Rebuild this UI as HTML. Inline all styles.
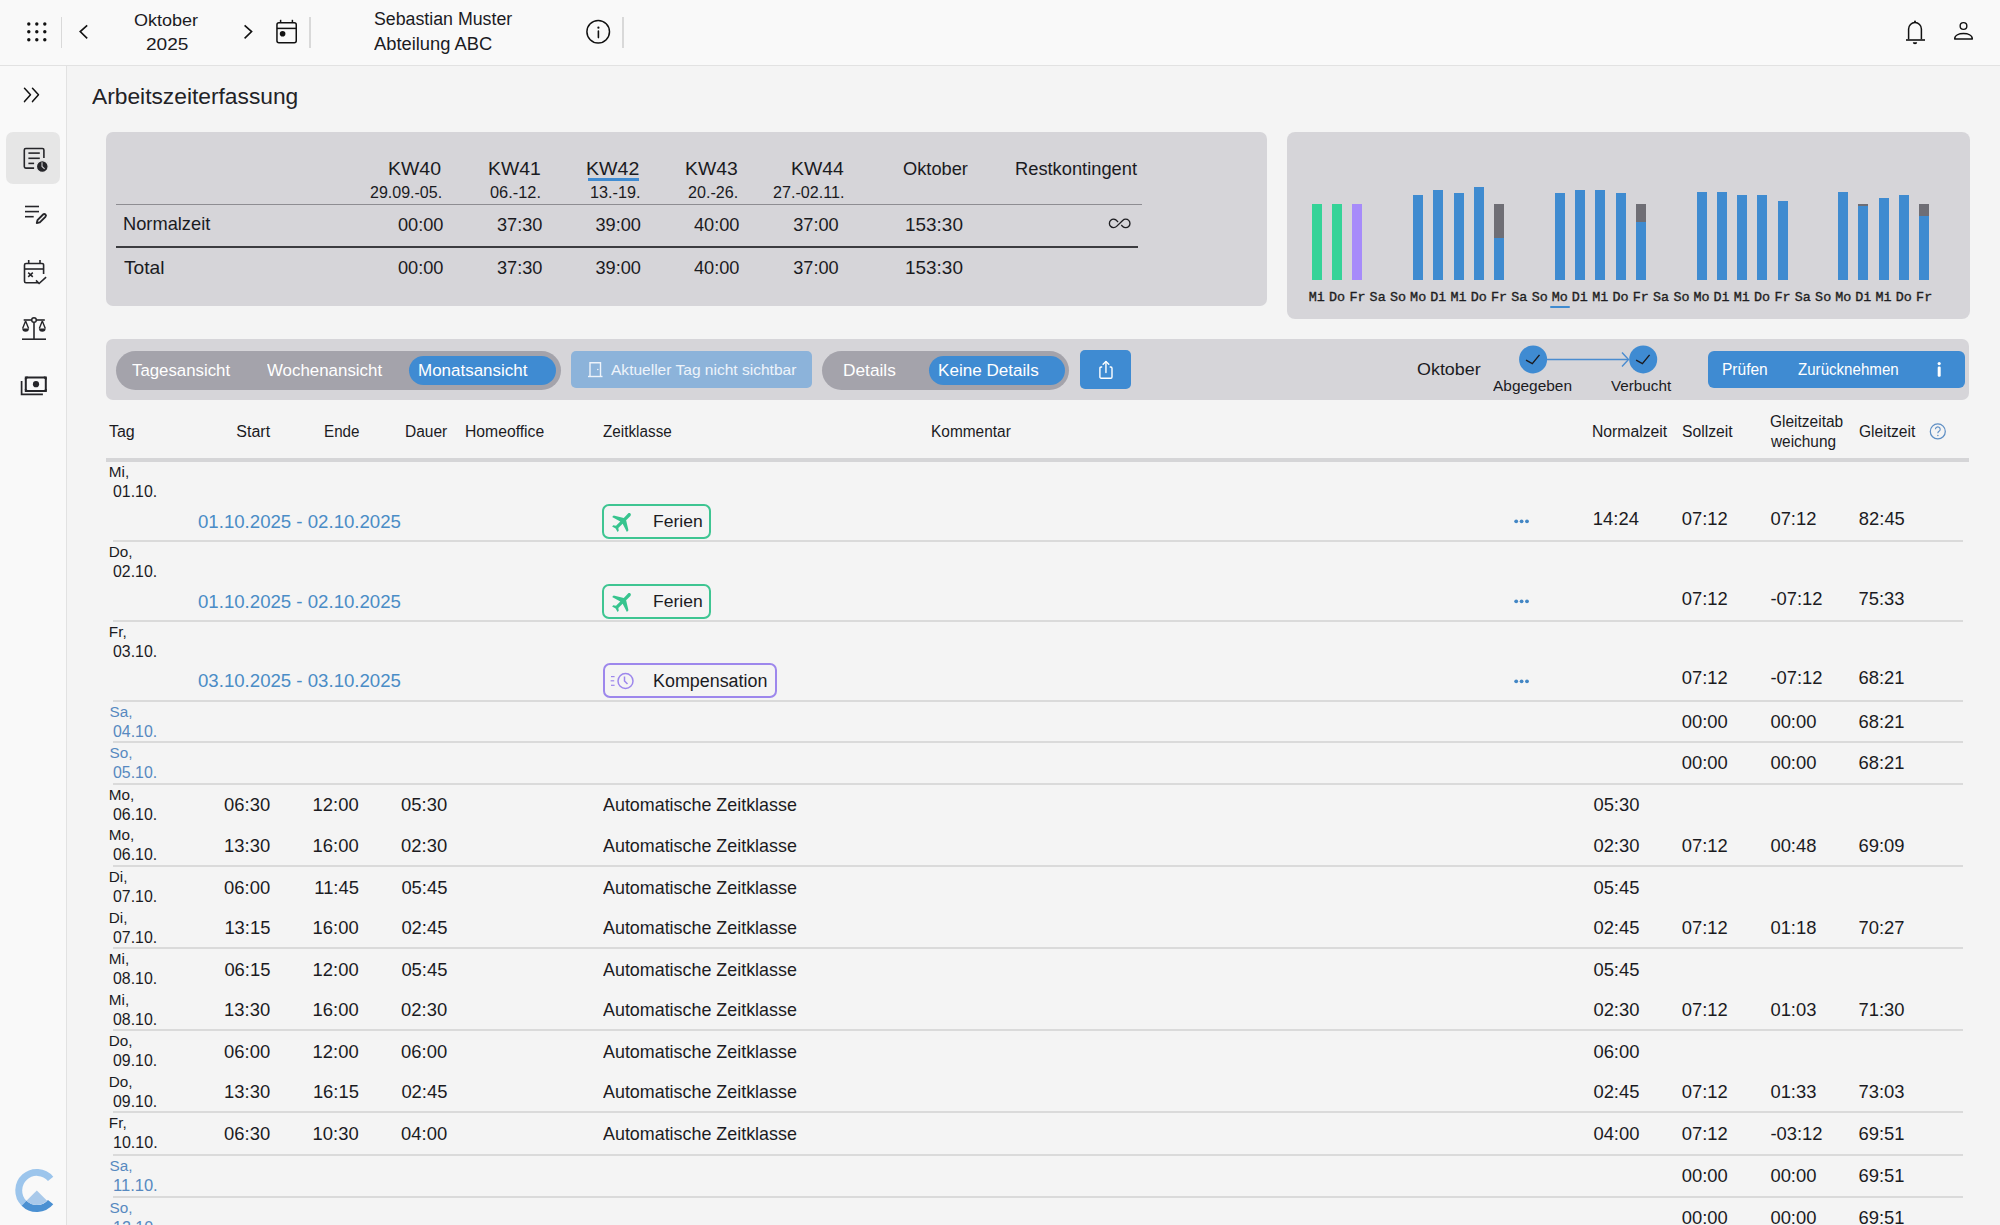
<!DOCTYPE html>
<html lang="de"><head><meta charset="utf-8"><title>Arbeitszeiterfassung</title>
<style>
html,body{margin:0;padding:0;}
body{width:2000px;height:1225px;overflow:hidden;position:relative;background:#f4f4f4;font-family:'Liberation Sans',sans-serif;}
span{position:absolute;white-space:nowrap;transform-origin:0 0;}
svg{overflow:visible;}
</style></head><body>
<div style="position:absolute;left:0px;top:0px;width:2000px;height:65px;background:#f9f9f9;border-radius:0px;"></div>
<div style="position:absolute;left:0px;top:65px;width:2000px;height:1px;background:#e2e2e2;border-radius:0px;"></div>
<div style="position:absolute;left:0px;top:66px;width:66px;height:1159px;background:#f9f9f9;border-radius:0px;"></div>
<div style="position:absolute;left:66px;top:66px;width:1px;height:1159px;background:#e2e2e2;border-radius:0px;"></div>
<svg style="position:absolute;left:0px;top:0px;" width="60" height="60" viewBox="0 0 60 60"><circle cx="28.8" cy="24" r="1.7" fill="#111"/><circle cx="28.8" cy="31.8" r="1.7" fill="#111"/><circle cx="28.8" cy="39.7" r="1.7" fill="#111"/><circle cx="36.8" cy="24" r="1.7" fill="#111"/><circle cx="36.8" cy="31.8" r="1.7" fill="#111"/><circle cx="36.8" cy="39.7" r="1.7" fill="#111"/><circle cx="44.8" cy="24" r="1.7" fill="#111"/><circle cx="44.8" cy="31.8" r="1.7" fill="#111"/><circle cx="44.8" cy="39.7" r="1.7" fill="#111"/></svg>
<div style="position:absolute;left:61px;top:17px;width:1px;height:31px;background:#d9d9d9;border-radius:0px;"></div>
<div style="position:absolute;left:309px;top:17px;width:2px;height:31px;background:#d9d9d9;border-radius:0px;"></div>
<div style="position:absolute;left:622px;top:17px;width:2px;height:31px;background:#d9d9d9;border-radius:0px;"></div>
<svg style="position:absolute;left:70px;top:15px;" width="200" height="35" viewBox="0 0 200 35"><polyline points="17.2,10.3 10.2,16.6 17.2,23.4" fill="none" stroke="#111" stroke-width="1.6" stroke-linejoin="miter"/><polyline points="174.6,10.3 181.6,16.6 174.6,23.4" fill="none" stroke="#111" stroke-width="1.6" stroke-linejoin="miter"/></svg>
<svg style="position:absolute;left:270px;top:15px;" width="35" height="35" viewBox="0 0 35 35"><rect x="6.95" y="7.75" width="19.3" height="20.1" rx="2" fill="none" stroke="#111" stroke-width="1.5"/><line x1="6.95" y1="13.4" x2="26.25" y2="13.4" stroke="#111" stroke-width="1.5"/><line x1="10.6" y1="4.8" x2="10.6" y2="8" stroke="#111" stroke-width="1.5"/><line x1="22.4" y1="4.8" x2="22.4" y2="8" stroke="#111" stroke-width="1.5"/><circle cx="12.6" cy="18.8" r="2.8" fill="#111"/></svg>
<svg style="position:absolute;left:580px;top:13px;" width="36" height="36" viewBox="0 0 36 36"><circle cx="18.2" cy="18.8" r="11.3" fill="none" stroke="#111" stroke-width="1.5"/><circle cx="18.4" cy="14.7" r="1.1" fill="#111"/><line x1="18.4" y1="18" x2="18.4" y2="24.6" stroke="#111" stroke-width="1.6" stroke-linecap="round"/></svg>
<svg style="position:absolute;left:1895px;top:15px;" width="40" height="35" viewBox="0 0 40 35"><path d="M13.6,24.3 V14 a6.4,6.4 0 0 1 12.8,0 V24.3" fill="none" stroke="#111" stroke-width="1.5"/><line x1="11" y1="25" x2="30" y2="25" stroke="#111" stroke-width="1.6"/><circle cx="20" cy="6.4" r="1" fill="#111"/><path d="M17.8,27.2 a2.2,2.1 0 0 0 4.4,0 z" fill="#111"/></svg>
<svg style="position:absolute;left:1945px;top:15px;" width="35" height="30" viewBox="0 0 35 30"><circle cx="18.5" cy="11" r="3.35" fill="none" stroke="#111" stroke-width="1.4"/><path d="M9.7,24 C9.7,20.3 14,18.6 18.5,18.6 C23,18.6 27.3,20.3 27.3,24 Z" fill="none" stroke="#111" stroke-width="1.5" stroke-linejoin="round"/></svg>
<svg style="position:absolute;left:15px;top:80px;" width="35" height="30" viewBox="0 0 35 30"><polyline points="9.5,8.3 15.5,14.8 9.5,21.6" fill="none" stroke="#111" stroke-width="1.5" stroke-linecap="round" stroke-linejoin="round"/><polyline points="17.5,8.3 23.5,14.8 17.5,21.6" fill="none" stroke="#111" stroke-width="1.5" stroke-linecap="round" stroke-linejoin="round"/></svg>
<div style="position:absolute;left:6px;top:132px;width:54px;height:52px;background:#e6e6e6;border-radius:7px;"></div>
<svg style="position:absolute;left:15px;top:140px;" width="40" height="40" viewBox="0 0 40 40"><path d="M19.1,28.1 H10.8 a1.5,1.5 0 0 1 -1.5,-1.5 V10 a1.5,1.5 0 0 1 1.5,-1.5 H27.4 a1.5,1.5 0 0 1 1.5,1.5 V17.9" fill="none" stroke="#26262a" stroke-width="1.6"/><line x1="13.4" y1="13.1" x2="24.8" y2="13.1" stroke="#26262a" stroke-width="1.6"/><line x1="13.4" y1="18.3" x2="24.8" y2="18.3" stroke="#26262a" stroke-width="1.6"/><line x1="13.4" y1="23.4" x2="19.1" y2="23.4" stroke="#26262a" stroke-width="1.6"/><circle cx="27.3" cy="26.5" r="5.9" fill="#26262a" stroke="#e6e6e6" stroke-width="1.3"/><path d="M27,22.3 v4.2 l2.6,2.4" fill="none" stroke="#cfcfd2" stroke-width="1.1"/></svg>
<svg style="position:absolute;left:15px;top:195px;" width="40" height="40" viewBox="0 0 40 40"><line x1="10" y1="11.5" x2="24" y2="11.5" stroke="#26262a" stroke-width="1.6"/><line x1="10" y1="16.6" x2="24" y2="16.6" stroke="#26262a" stroke-width="1.6"/><line x1="10" y1="21.7" x2="18.7" y2="21.7" stroke="#26262a" stroke-width="1.6"/><path d="M21.8,28 l0.7,-2.9 l5.6,-5.6 a1.6,1.6 0 0 1 2.3,2.3 l-5.6,5.6 z" fill="none" stroke="#26262a" stroke-width="1.9" stroke-linejoin="round"/></svg>
<svg style="position:absolute;left:15px;top:252px;" width="40" height="40" viewBox="0 0 40 40"><path d="M23.5,30.7 H11 a1.5,1.5 0 0 1 -1.5,-1.5 V13 a1.5,1.5 0 0 1 1.5,-1.5 H27.1 a1.5,1.5 0 0 1 1.5,1.5 V22" fill="none" stroke="#26262a" stroke-width="1.6"/><line x1="9.5" y1="17" x2="28.6" y2="17" stroke="#26262a" stroke-width="1.6"/><line x1="13.7" y1="8" x2="13.7" y2="11.5" stroke="#26262a" stroke-width="1.6"/><line x1="25" y1="8" x2="25" y2="11.5" stroke="#26262a" stroke-width="1.6"/><path d="M13.2,20.6 l4.6,4.3 M17.8,20.6 l-4.6,4.3" stroke="#26262a" stroke-width="1.5"/><polyline points="21,28.4 24.1,31.5 31.1,25.2" fill="none" stroke="#26262a" stroke-width="1.6"/></svg>
<svg style="position:absolute;left:15px;top:310px;" width="40" height="35" viewBox="0 0 40 35"><circle cx="19" cy="10" r="2.3" fill="none" stroke="#26262a" stroke-width="1.5"/><line x1="8.7" y1="10" x2="16.7" y2="10" stroke="#26262a" stroke-width="1.6"/><line x1="21.3" y1="10" x2="29.8" y2="10" stroke="#26262a" stroke-width="1.6"/><line x1="19" y1="12.3" x2="19" y2="29" stroke="#26262a" stroke-width="1.6"/><line x1="7" y1="29.2" x2="31" y2="29.2" stroke="#26262a" stroke-width="1.6"/><path d="M10.6,11 l-3,7.5 M10.6,11 l3,7.5 M27.3,11 l-3,7.5 M27.3,11 l3,7.5" fill="none" stroke="#26262a" stroke-width="1.4"/><path d="M7.3,18.6 h6.6 a3.3,3.2 0 0 1 -6.6,0 z M24,18.6 h6.6 a3.3,3.2 0 0 1 -6.6,0 z" fill="#26262a"/></svg>
<svg style="position:absolute;left:15px;top:368px;" width="40" height="35" viewBox="0 0 40 35"><rect x="10.8" y="9.5" width="20" height="13.6" rx="1" fill="none" stroke="#26262a" stroke-width="2"/><circle cx="21" cy="16.2" r="3.1" fill="#26262a"/><path d="M6.6,13 V26.3 H27.9" fill="none" stroke="#26262a" stroke-width="1.7"/><path d="M9.8,8.5 h3 a2.5,2.5 0 0 1 -3,3 z M31.8,8.5 h-3 a2.5,2.5 0 0 0 3,3 z M9.8,24.1 h3 a2.5,2.5 0 0 0 -3,-3 z M31.8,24.1 h-3 a2.5,2.5 0 0 1 3,-3 z" fill="#26262a"/></svg>
<svg style="position:absolute;left:10px;top:1160px;" width="50" height="60" viewBox="0 0 50 60"><path d="M40.63,18.9 A18.05,18.05 0 1 0 14.04,43.26" fill="none" stroke="#9cc5ec" stroke-width="6.9"/><path d="M14.04,43.26 A18.05,18.05 0 0 0 40.63,42.1" fill="none" stroke="#4a90d2" stroke-width="6.9"/><path d="M26.8,30.5 L37.12,40.82 A14.6,14.6 0 0 1 16.48,40.82 Z" fill="#a9c9ea"/></svg>
<div style="position:absolute;left:106px;top:132px;width:1161px;height:174px;background:#d6d5d9;border-radius:7px;"></div>
<div style="position:absolute;left:588px;top:178px;width:51px;height:2.5px;background:#3f8bd2;border-radius:0px;"></div>
<div style="position:absolute;left:116px;top:204px;width:1026px;height:1px;background:#8e8d92;border-radius:0px;"></div>
<div style="position:absolute;left:116px;top:246.2px;width:1022px;height:1.700000000000017px;background:#3c3c40;border-radius:0px;"></div>
<svg style="position:absolute;left:1100px;top:212px;" width="32" height="22" viewBox="0 0 32 22"><path d="M16.82,8.7 A4.2,4.2 0 1 0 16.57,14.37 L22.7,8.4 A4.25,4.25 0 1 1 22.7,14.4 L21.3,13.1 M16.82,8.7 L18.1,9.9" fill="none" stroke="#1e1e22" stroke-width="1.35"/></svg>
<div style="position:absolute;left:1287px;top:132px;width:683px;height:186.5px;background:#d6d5d9;border-radius:8px;"></div>
<div style="position:absolute;left:1312.0px;top:203.8px;width:10.0px;height:75.89999999999998px;background:#35d398;border-radius:0px;"></div>
<div style="position:absolute;left:1332.24px;top:203.8px;width:10.0px;height:75.89999999999998px;background:#35d398;border-radius:0px;"></div>
<div style="position:absolute;left:1352.48px;top:203.8px;width:10.0px;height:75.89999999999998px;background:#a78bfa;border-radius:0px;"></div>
<div style="position:absolute;left:1413.2px;top:194.8px;width:10.0px;height:84.89999999999998px;background:#3f8bd0;border-radius:0px;"></div>
<div style="position:absolute;left:1433.44px;top:189.8px;width:10.0px;height:89.89999999999998px;background:#3f8bd0;border-radius:0px;"></div>
<div style="position:absolute;left:1453.68px;top:192.5px;width:10.0px;height:87.19999999999999px;background:#3f8bd0;border-radius:0px;"></div>
<div style="position:absolute;left:1473.92px;top:187.3px;width:10.0px;height:92.39999999999998px;background:#3f8bd0;border-radius:0px;"></div>
<div style="position:absolute;left:1494.16px;top:203.8px;width:10.0px;height:75.89999999999998px;background:#6f6e75;border-radius:0px;"></div>
<div style="position:absolute;left:1494.16px;top:238px;width:10.0px;height:41.69999999999999px;background:#3f8bd0;border-radius:0px;"></div>
<div style="position:absolute;left:1554.88px;top:192.5px;width:10.0px;height:87.19999999999999px;background:#3f8bd0;border-radius:0px;"></div>
<div style="position:absolute;left:1575.12px;top:189.8px;width:10.0px;height:89.89999999999998px;background:#3f8bd0;border-radius:0px;"></div>
<div style="position:absolute;left:1595.36px;top:189.8px;width:10.0px;height:89.89999999999998px;background:#3f8bd0;border-radius:0px;"></div>
<div style="position:absolute;left:1615.6px;top:192.5px;width:10.0px;height:87.19999999999999px;background:#3f8bd0;border-radius:0px;"></div>
<div style="position:absolute;left:1635.84px;top:203.8px;width:10.0px;height:75.89999999999998px;background:#6f6e75;border-radius:0px;"></div>
<div style="position:absolute;left:1635.84px;top:221.8px;width:10.0px;height:57.89999999999998px;background:#3f8bd0;border-radius:0px;"></div>
<div style="position:absolute;left:1696.56px;top:192.2px;width:10.0px;height:87.5px;background:#3f8bd0;border-radius:0px;"></div>
<div style="position:absolute;left:1716.8px;top:192.2px;width:10.0px;height:87.5px;background:#3f8bd0;border-radius:0px;"></div>
<div style="position:absolute;left:1737.04px;top:195px;width:10.0px;height:84.69999999999999px;background:#3f8bd0;border-radius:0px;"></div>
<div style="position:absolute;left:1757.28px;top:195px;width:10.0px;height:84.69999999999999px;background:#3f8bd0;border-radius:0px;"></div>
<div style="position:absolute;left:1777.52px;top:201.3px;width:10.0px;height:78.39999999999998px;background:#3f8bd0;border-radius:0px;"></div>
<div style="position:absolute;left:1838.24px;top:192.2px;width:10.0px;height:87.5px;background:#3f8bd0;border-radius:0px;"></div>
<div style="position:absolute;left:1858.48px;top:203.8px;width:10.0px;height:75.89999999999998px;background:#6f6e75;border-radius:0px;"></div>
<div style="position:absolute;left:1858.48px;top:205.5px;width:10.0px;height:74.19999999999999px;background:#3f8bd0;border-radius:0px;"></div>
<div style="position:absolute;left:1878.72px;top:197.5px;width:10.0px;height:82.19999999999999px;background:#3f8bd0;border-radius:0px;"></div>
<div style="position:absolute;left:1898.96px;top:195px;width:10.0px;height:84.69999999999999px;background:#3f8bd0;border-radius:0px;"></div>
<div style="position:absolute;left:1919.2px;top:203.8px;width:10.0px;height:75.89999999999998px;background:#6f6e75;border-radius:0px;"></div>
<div style="position:absolute;left:1919.2px;top:216px;width:10.0px;height:63.69999999999999px;background:#3f8bd0;border-radius:0px;"></div>
<div style="position:absolute;left:1549.6px;top:305.5px;width:20.200000000000045px;height:2.5px;background:#3f8bd0;border-radius:1px;"></div>
<div style="position:absolute;left:106px;top:339px;width:1863px;height:61px;background:#d6d5d9;border-radius:7px;"></div>
<div style="position:absolute;left:116px;top:351px;width:444.5px;height:38.69999999999999px;background:#a4a3ab;border-radius:20px;"></div>
<div style="position:absolute;left:409.3px;top:355.5px;width:146.7px;height:29.5px;background:#3f8bd2;border-radius:15px;"></div>
<div style="position:absolute;left:570.7px;top:350.7px;width:241.0px;height:37.400000000000034px;background:#8cb3da;border-radius:5px;"></div>
<svg style="position:absolute;left:583px;top:358px;" width="25" height="24" viewBox="0 0 25 24"><path d="M7,18.5 V4.8 H17.5 V18.5" fill="none" stroke="#eef3fa" stroke-width="1.4"/><line x1="5" y1="18.5" x2="19.5" y2="18.5" stroke="#eef3fa" stroke-width="1.4"/><circle cx="14.8" cy="11.5" r="0.8" fill="#eef3fa"/></svg>
<div style="position:absolute;left:822.2px;top:350.7px;width:247.29999999999995px;height:39.10000000000002px;background:#a4a3ab;border-radius:20px;"></div>
<div style="position:absolute;left:928.7px;top:355.8px;width:136.5999999999999px;height:28.899999999999977px;background:#3f8bd2;border-radius:15px;"></div>
<div style="position:absolute;left:1080.3px;top:350.2px;width:50.700000000000045px;height:38.400000000000034px;background:#3f8bd2;border-radius:5px;"></div>
<svg style="position:absolute;left:1093px;top:356px;" width="26" height="28" viewBox="0 0 26 28"><path d="M9.2,11 H8.1 a1.2,1.2 0 0 0 -1.2,1.2 V21 a1.2,1.2 0 0 0 1.2,1.2 H17.8 a1.2,1.2 0 0 0 1.2,-1.2 V12.2 a1.2,1.2 0 0 0 -1.2,-1.2 H16.7" fill="none" stroke="#fff" stroke-width="1.4"/><line x1="12.95" y1="5.6" x2="12.95" y2="16.6" stroke="#fff" stroke-width="1.4" stroke-linecap="round"/><polyline points="10.1,8.3 12.95,5.4 15.8,8.3" fill="none" stroke="#fff" stroke-width="1.4" stroke-linecap="round" stroke-linejoin="round"/></svg>
<svg style="position:absolute;left:1515px;top:341px;" width="150" height="38" viewBox="0 0 150 38"><line x1="32" y1="18.5" x2="113" y2="18.5" stroke="#4a8cd0" stroke-width="1.5"/><polyline points="107,11.5 113.5,18.5 107,25.5" fill="none" stroke="#4a8cd0" stroke-width="1.4"/><circle cx="18.1" cy="18.4" r="14" fill="#3f8bd2"/><circle cx="128.2" cy="18.4" r="14" fill="#3f8bd2"/><polyline points="11,19.2 17.3,22.7 24.5,13.9" fill="none" stroke="#1b1b1f" stroke-width="1.4"/><polyline points="121.1,19.2 127.4,22.7 134.6,13.9" fill="none" stroke="#1b1b1f" stroke-width="1.4"/></svg>
<div style="position:absolute;left:1708px;top:350.6px;width:256.5999999999999px;height:37.5px;background:#3f8bd2;border-radius:6px;"></div>
<svg style="position:absolute;left:1930px;top:358px;" width="20" height="22" viewBox="0 0 20 22"><circle cx="9.2" cy="5.6" r="1.6" fill="#fff"/><rect x="7.7" y="8.6" width="3" height="10.2" rx="1.2" fill="#fff"/></svg>
<svg style="position:absolute;left:1927px;top:421px;" width="21" height="21" viewBox="0 0 21 21"><circle cx="10.8" cy="10.4" r="7.5" fill="none" stroke="#5f8fc4" stroke-width="1.25"/><path d="M8.4,8.2 a2.4,2.3 0 1 1 3.6,2 c-0.8,0.5 -1.2,1.1 -1.2,2.1" fill="none" stroke="#5f8fc4" stroke-width="1.1"/><circle cx="10.9" cy="14.5" r="0.75" fill="#5f8fc4"/></svg>
<div style="position:absolute;left:106px;top:458px;width:1863px;height:4px;background:#d5d5d7;border-radius:0px;"></div>
<div style="position:absolute;left:112.5px;top:540px;width:1850.5px;height:2px;background:#dadada;border-radius:0px;"></div>
<div style="position:absolute;left:112.5px;top:620px;width:1850.5px;height:2px;background:#dadada;border-radius:0px;"></div>
<div style="position:absolute;left:112.5px;top:700px;width:1850.5px;height:2px;background:#dadada;border-radius:0px;"></div>
<div style="position:absolute;left:112.5px;top:741px;width:1850.5px;height:2px;background:#dadada;border-radius:0px;"></div>
<div style="position:absolute;left:112.5px;top:783px;width:1850.5px;height:2px;background:#dadada;border-radius:0px;"></div>
<div style="position:absolute;left:112.5px;top:865px;width:1850.5px;height:2px;background:#dadada;border-radius:0px;"></div>
<div style="position:absolute;left:112.5px;top:947px;width:1850.5px;height:2px;background:#dadada;border-radius:0px;"></div>
<div style="position:absolute;left:112.5px;top:1029px;width:1850.5px;height:2px;background:#dadada;border-radius:0px;"></div>
<div style="position:absolute;left:112.5px;top:1111px;width:1850.5px;height:2px;background:#dadada;border-radius:0px;"></div>
<div style="position:absolute;left:112.5px;top:1154px;width:1850.5px;height:2px;background:#dadada;border-radius:0px;"></div>
<div style="position:absolute;left:112.5px;top:1196px;width:1850.5px;height:2px;background:#dadada;border-radius:0px;"></div>
<div style="position:absolute;left:602.3px;top:503.7px;width:108.30000000000007px;height:35.400000000000034px;background:transparent;border-radius:7px;box-sizing:border-box;border:2.6px solid #3ec592;"></div>
<svg style="position:absolute;left:610px;top:510.7px;" width="25" height="22" viewBox="0 0 25 22"><path transform="translate(12 11) scale(1.1) rotate(45) translate(-12 -11)" d="M21.5,14.2 v-2 l-8,-5 V1.7 c0,-0.85 -0.65,-1.5 -1.5,-1.5 s-1.5,0.65 -1.5,1.5 V7.2 l-8,5 v2 l8,-2.5 V17.2 l-2,1.5 v1.5 l3.5,-1 l3.5,1 v-1.5 l-2,-1.5 V11.7 z" fill="#36c48e"/></svg>
<svg style="position:absolute;left:1512px;top:516px;" width="20" height="10" viewBox="0 0 20 10"><circle cx="4.2" cy="5.3" r="1.9" fill="#4286c4"/><circle cx="9.6" cy="5.3" r="1.9" fill="#4286c4"/><circle cx="15" cy="5.3" r="1.9" fill="#4286c4"/></svg>
<div style="position:absolute;left:602.3px;top:583.8000000000001px;width:108.30000000000007px;height:35.39999999999998px;background:transparent;border-radius:7px;box-sizing:border-box;border:2.6px solid #3ec592;"></div>
<svg style="position:absolute;left:610px;top:590.8000000000001px;" width="25" height="22" viewBox="0 0 25 22"><path transform="translate(12 11) scale(1.1) rotate(45) translate(-12 -11)" d="M21.5,14.2 v-2 l-8,-5 V1.7 c0,-0.85 -0.65,-1.5 -1.5,-1.5 s-1.5,0.65 -1.5,1.5 V7.2 l-8,5 v2 l8,-2.5 V17.2 l-2,1.5 v1.5 l3.5,-1 l3.5,1 v-1.5 l-2,-1.5 V11.7 z" fill="#36c48e"/></svg>
<svg style="position:absolute;left:1512px;top:596px;" width="20" height="10" viewBox="0 0 20 10"><circle cx="4.2" cy="5.3" r="1.9" fill="#4286c4"/><circle cx="9.6" cy="5.3" r="1.9" fill="#4286c4"/><circle cx="15" cy="5.3" r="1.9" fill="#4286c4"/></svg>
<div style="position:absolute;left:602.5px;top:663.0px;width:174.0px;height:34.60000000000002px;background:transparent;border-radius:7px;box-sizing:border-box;border:2.4px solid #9d87ec;"></div>
<svg style="position:absolute;left:608px;top:671.0px;" width="30" height="20" viewBox="0 0 30 20"><line x1="3" y1="5.6" x2="6.6" y2="5.6" stroke="#9d87ec" stroke-width="1.2"/><line x1="2.6" y1="9.8" x2="6.2" y2="9.8" stroke="#9d87ec" stroke-width="1.2"/><line x1="3" y1="14.3" x2="6.6" y2="14.3" stroke="#9d87ec" stroke-width="1.2"/><circle cx="17.5" cy="10" r="7.5" fill="none" stroke="#9d87ec" stroke-width="1.5"/><polyline points="16.5,5.5 16.5,10 19.5,13" fill="none" stroke="#9d87ec" stroke-width="1.5"/></svg>
<svg style="position:absolute;left:1512px;top:676px;" width="20" height="10" viewBox="0 0 20 10"><circle cx="4.2" cy="5.3" r="1.9" fill="#4286c4"/><circle cx="9.6" cy="5.3" r="1.9" fill="#4286c4"/><circle cx="15" cy="5.3" r="1.9" fill="#4286c4"/></svg>
<span style="left:134.35px;top:11.57px;font-size:17.4px;line-height:17.4px;color:#1b1b1f;font-family:'Liberation Sans', sans-serif;font-weight:normal;transform:scaleX(1.0362);">Oktober</span>
<span style="left:145.51px;top:35.51px;font-size:17.0px;line-height:17.0px;color:#1b1b1f;font-family:'Liberation Sans', sans-serif;font-weight:normal;transform:scaleX(1.1230);">2025</span>
<span style="left:373.84px;top:11.30px;font-size:17.6px;line-height:17.6px;color:#1b1b1f;font-family:'Liberation Sans', sans-serif;font-weight:normal;transform:scaleX(1.0094);">Sebastian Muster</span>
<span style="left:374.40px;top:35.60px;font-size:17.6px;line-height:17.6px;color:#1b1b1f;font-family:'Liberation Sans', sans-serif;font-weight:normal;transform:scaleX(1.0416);">Abteilung ABC</span>
<span style="left:92.00px;top:85.78px;font-size:22.0px;line-height:22.0px;color:#222226;font-family:'Liberation Sans', sans-serif;font-weight:normal;transform:scaleX(1.0349);">Arbeitszeiterfassung</span>
<span style="left:388.48px;top:161.10px;font-size:17.6px;line-height:17.6px;color:#1b1b1f;font-family:'Liberation Sans', sans-serif;font-weight:normal;transform:scaleX(1.1060);">KW40</span>
<span style="left:370.25px;top:183.80px;font-size:16.3px;line-height:16.3px;color:#1b1b1f;font-family:'Liberation Sans', sans-serif;font-weight:normal;transform:scaleX(0.9836);">29.09.-05.</span>
<span style="left:487.99px;top:161.10px;font-size:17.6px;line-height:17.6px;color:#1b1b1f;font-family:'Liberation Sans', sans-serif;font-weight:normal;transform:scaleX(1.1017);">KW41</span>
<span style="left:490.49px;top:183.80px;font-size:16.3px;line-height:16.3px;color:#1b1b1f;font-family:'Liberation Sans', sans-serif;font-weight:normal;transform:scaleX(1.0048);">06.-12.</span>
<span style="left:586.47px;top:161.10px;font-size:17.6px;line-height:17.6px;color:#1b1b1f;font-family:'Liberation Sans', sans-serif;font-weight:normal;transform:scaleX(1.1126);">KW42</span>
<span style="left:589.99px;top:183.80px;font-size:16.3px;line-height:16.3px;color:#1b1b1f;font-family:'Liberation Sans', sans-serif;font-weight:normal;transform:scaleX(0.9947);">13.-19.</span>
<span style="left:684.79px;top:161.10px;font-size:17.6px;line-height:17.6px;color:#1b1b1f;font-family:'Liberation Sans', sans-serif;font-weight:normal;transform:scaleX(1.0995);">KW43</span>
<span style="left:687.94px;top:183.80px;font-size:16.3px;line-height:16.3px;color:#1b1b1f;font-family:'Liberation Sans', sans-serif;font-weight:normal;transform:scaleX(0.9895);">20.-26.</span>
<span style="left:791.09px;top:161.10px;font-size:17.6px;line-height:17.6px;color:#1b1b1f;font-family:'Liberation Sans', sans-serif;font-weight:normal;transform:scaleX(1.1016);">KW44</span>
<span style="left:772.94px;top:183.80px;font-size:16.3px;line-height:16.3px;color:#1b1b1f;font-family:'Liberation Sans', sans-serif;font-weight:normal;transform:scaleX(0.9906);">27.-02.11.</span>
<span style="left:903.14px;top:161.10px;font-size:17.6px;line-height:17.6px;color:#1b1b1f;font-family:'Liberation Sans', sans-serif;font-weight:normal;transform:scaleX(1.0374);">Oktober</span>
<span style="left:1014.57px;top:161.10px;font-size:17.6px;line-height:17.6px;color:#1b1b1f;font-family:'Liberation Sans', sans-serif;font-weight:normal;transform:scaleX(1.0397);">Restkontingent</span>
<span style="left:122.57px;top:215.93px;font-size:17.8px;line-height:17.8px;color:#1b1b1f;font-family:'Liberation Sans', sans-serif;font-weight:normal;transform:scaleX(1.0271);">Normalzeit</span>
<span style="left:123.70px;top:258.59px;font-size:18.2px;line-height:18.2px;color:#1b1b1f;font-family:'Liberation Sans', sans-serif;font-weight:normal;transform:scaleX(1.0552);">Total</span>
<span style="left:397.91px;top:215.59px;font-size:18.2px;line-height:18.2px;color:#1b1b1f;font-family:'Liberation Sans', sans-serif;font-weight:normal;">00:00</span>
<span style="left:496.91px;top:215.59px;font-size:18.2px;line-height:18.2px;color:#1b1b1f;font-family:'Liberation Sans', sans-serif;font-weight:normal;">37:30</span>
<span style="left:595.41px;top:215.59px;font-size:18.2px;line-height:18.2px;color:#1b1b1f;font-family:'Liberation Sans', sans-serif;font-weight:normal;">39:00</span>
<span style="left:693.91px;top:215.59px;font-size:18.2px;line-height:18.2px;color:#1b1b1f;font-family:'Liberation Sans', sans-serif;font-weight:normal;">40:00</span>
<span style="left:793.21px;top:215.59px;font-size:18.2px;line-height:18.2px;color:#1b1b1f;font-family:'Liberation Sans', sans-serif;font-weight:normal;">37:00</span>
<span style="left:904.82px;top:215.59px;font-size:18.2px;line-height:18.2px;color:#1b1b1f;font-family:'Liberation Sans', sans-serif;font-weight:normal;transform:scaleX(1.0411);">153:30</span>
<span style="left:397.91px;top:258.59px;font-size:18.2px;line-height:18.2px;color:#1b1b1f;font-family:'Liberation Sans', sans-serif;font-weight:normal;">00:00</span>
<span style="left:496.91px;top:258.59px;font-size:18.2px;line-height:18.2px;color:#1b1b1f;font-family:'Liberation Sans', sans-serif;font-weight:normal;">37:30</span>
<span style="left:595.41px;top:258.59px;font-size:18.2px;line-height:18.2px;color:#1b1b1f;font-family:'Liberation Sans', sans-serif;font-weight:normal;">39:00</span>
<span style="left:693.91px;top:258.59px;font-size:18.2px;line-height:18.2px;color:#1b1b1f;font-family:'Liberation Sans', sans-serif;font-weight:normal;">40:00</span>
<span style="left:793.21px;top:258.59px;font-size:18.2px;line-height:18.2px;color:#1b1b1f;font-family:'Liberation Sans', sans-serif;font-weight:normal;">37:00</span>
<span style="left:904.82px;top:258.59px;font-size:18.2px;line-height:18.2px;color:#1b1b1f;font-family:'Liberation Sans', sans-serif;font-weight:normal;transform:scaleX(1.0411);">153:30</span>
<span style="left:1308.79px;top:291.22px;font-size:13.4px;line-height:13.4px;color:#1e1e22;font-family:'Liberation Mono', monospace;font-weight:normal;-webkit-text-stroke:0.35px #1e1e22;">Mi</span>
<span style="left:1329.03px;top:291.22px;font-size:13.4px;line-height:13.4px;color:#1e1e22;font-family:'Liberation Mono', monospace;font-weight:normal;-webkit-text-stroke:0.35px #1e1e22;">Do</span>
<span style="left:1349.38px;top:291.22px;font-size:13.4px;line-height:13.4px;color:#1e1e22;font-family:'Liberation Mono', monospace;font-weight:normal;-webkit-text-stroke:0.35px #1e1e22;">Fr</span>
<span style="left:1369.62px;top:291.22px;font-size:13.4px;line-height:13.4px;color:#1e1e22;font-family:'Liberation Mono', monospace;font-weight:normal;-webkit-text-stroke:0.35px #1e1e22;">Sa</span>
<span style="left:1390.07px;top:291.22px;font-size:13.4px;line-height:13.4px;color:#1e1e22;font-family:'Liberation Mono', monospace;font-weight:normal;-webkit-text-stroke:0.35px #1e1e22;">So</span>
<span style="left:1410.10px;top:291.22px;font-size:13.4px;line-height:13.4px;color:#1e1e22;font-family:'Liberation Mono', monospace;font-weight:normal;-webkit-text-stroke:0.35px #1e1e22;">Mo</span>
<span style="left:1430.13px;top:291.22px;font-size:13.4px;line-height:13.4px;color:#1e1e22;font-family:'Liberation Mono', monospace;font-weight:normal;-webkit-text-stroke:0.35px #1e1e22;">Di</span>
<span style="left:1450.47px;top:291.22px;font-size:13.4px;line-height:13.4px;color:#1e1e22;font-family:'Liberation Mono', monospace;font-weight:normal;-webkit-text-stroke:0.35px #1e1e22;">Mi</span>
<span style="left:1470.71px;top:291.22px;font-size:13.4px;line-height:13.4px;color:#1e1e22;font-family:'Liberation Mono', monospace;font-weight:normal;-webkit-text-stroke:0.35px #1e1e22;">Do</span>
<span style="left:1491.06px;top:291.22px;font-size:13.4px;line-height:13.4px;color:#1e1e22;font-family:'Liberation Mono', monospace;font-weight:normal;-webkit-text-stroke:0.35px #1e1e22;">Fr</span>
<span style="left:1511.30px;top:291.22px;font-size:13.4px;line-height:13.4px;color:#1e1e22;font-family:'Liberation Mono', monospace;font-weight:normal;-webkit-text-stroke:0.35px #1e1e22;">Sa</span>
<span style="left:1531.75px;top:291.22px;font-size:13.4px;line-height:13.4px;color:#1e1e22;font-family:'Liberation Mono', monospace;font-weight:normal;-webkit-text-stroke:0.35px #1e1e22;">So</span>
<span style="left:1551.78px;top:291.22px;font-size:13.4px;line-height:13.4px;color:#1e1e22;font-family:'Liberation Mono', monospace;font-weight:normal;-webkit-text-stroke:0.35px #1e1e22;">Mo</span>
<span style="left:1571.81px;top:291.22px;font-size:13.4px;line-height:13.4px;color:#1e1e22;font-family:'Liberation Mono', monospace;font-weight:normal;-webkit-text-stroke:0.35px #1e1e22;">Di</span>
<span style="left:1592.15px;top:291.22px;font-size:13.4px;line-height:13.4px;color:#1e1e22;font-family:'Liberation Mono', monospace;font-weight:normal;-webkit-text-stroke:0.35px #1e1e22;">Mi</span>
<span style="left:1612.39px;top:291.22px;font-size:13.4px;line-height:13.4px;color:#1e1e22;font-family:'Liberation Mono', monospace;font-weight:normal;-webkit-text-stroke:0.35px #1e1e22;">Do</span>
<span style="left:1632.74px;top:291.22px;font-size:13.4px;line-height:13.4px;color:#1e1e22;font-family:'Liberation Mono', monospace;font-weight:normal;-webkit-text-stroke:0.35px #1e1e22;">Fr</span>
<span style="left:1652.98px;top:291.22px;font-size:13.4px;line-height:13.4px;color:#1e1e22;font-family:'Liberation Mono', monospace;font-weight:normal;-webkit-text-stroke:0.35px #1e1e22;">Sa</span>
<span style="left:1673.43px;top:291.22px;font-size:13.4px;line-height:13.4px;color:#1e1e22;font-family:'Liberation Mono', monospace;font-weight:normal;-webkit-text-stroke:0.35px #1e1e22;">So</span>
<span style="left:1693.46px;top:291.22px;font-size:13.4px;line-height:13.4px;color:#1e1e22;font-family:'Liberation Mono', monospace;font-weight:normal;-webkit-text-stroke:0.35px #1e1e22;">Mo</span>
<span style="left:1713.49px;top:291.22px;font-size:13.4px;line-height:13.4px;color:#1e1e22;font-family:'Liberation Mono', monospace;font-weight:normal;-webkit-text-stroke:0.35px #1e1e22;">Di</span>
<span style="left:1733.83px;top:291.22px;font-size:13.4px;line-height:13.4px;color:#1e1e22;font-family:'Liberation Mono', monospace;font-weight:normal;-webkit-text-stroke:0.35px #1e1e22;">Mi</span>
<span style="left:1754.07px;top:291.22px;font-size:13.4px;line-height:13.4px;color:#1e1e22;font-family:'Liberation Mono', monospace;font-weight:normal;-webkit-text-stroke:0.35px #1e1e22;">Do</span>
<span style="left:1774.42px;top:291.22px;font-size:13.4px;line-height:13.4px;color:#1e1e22;font-family:'Liberation Mono', monospace;font-weight:normal;-webkit-text-stroke:0.35px #1e1e22;">Fr</span>
<span style="left:1794.66px;top:291.22px;font-size:13.4px;line-height:13.4px;color:#1e1e22;font-family:'Liberation Mono', monospace;font-weight:normal;-webkit-text-stroke:0.35px #1e1e22;">Sa</span>
<span style="left:1815.11px;top:291.22px;font-size:13.4px;line-height:13.4px;color:#1e1e22;font-family:'Liberation Mono', monospace;font-weight:normal;-webkit-text-stroke:0.35px #1e1e22;">So</span>
<span style="left:1835.14px;top:291.22px;font-size:13.4px;line-height:13.4px;color:#1e1e22;font-family:'Liberation Mono', monospace;font-weight:normal;-webkit-text-stroke:0.35px #1e1e22;">Mo</span>
<span style="left:1855.17px;top:291.22px;font-size:13.4px;line-height:13.4px;color:#1e1e22;font-family:'Liberation Mono', monospace;font-weight:normal;-webkit-text-stroke:0.35px #1e1e22;">Di</span>
<span style="left:1875.51px;top:291.22px;font-size:13.4px;line-height:13.4px;color:#1e1e22;font-family:'Liberation Mono', monospace;font-weight:normal;-webkit-text-stroke:0.35px #1e1e22;">Mi</span>
<span style="left:1895.75px;top:291.22px;font-size:13.4px;line-height:13.4px;color:#1e1e22;font-family:'Liberation Mono', monospace;font-weight:normal;-webkit-text-stroke:0.35px #1e1e22;">Do</span>
<span style="left:1916.10px;top:291.22px;font-size:13.4px;line-height:13.4px;color:#1e1e22;font-family:'Liberation Mono', monospace;font-weight:normal;-webkit-text-stroke:0.35px #1e1e22;">Fr</span>
<span style="left:131.74px;top:361.77px;font-size:17.4px;line-height:17.4px;color:#fff;font-family:'Liberation Sans', sans-serif;font-weight:normal;transform:scaleX(0.9660);">Tagesansicht</span>
<span style="left:267.20px;top:361.77px;font-size:17.4px;line-height:17.4px;color:#fff;font-family:'Liberation Sans', sans-serif;font-weight:normal;transform:scaleX(0.9705);">Wochenansicht</span>
<span style="left:418.47px;top:361.77px;font-size:17.4px;line-height:17.4px;color:#fff;font-family:'Liberation Sans', sans-serif;font-weight:normal;transform:scaleX(0.9757);">Monatsansicht</span>
<span style="left:611.20px;top:362.25px;font-size:15.3px;line-height:15.3px;color:#eef3fa;font-family:'Liberation Sans', sans-serif;font-weight:normal;transform:scaleX(1.0155);">Aktueller Tag nicht sichtbar</span>
<span style="left:842.65px;top:361.77px;font-size:17.4px;line-height:17.4px;color:#fff;font-family:'Liberation Sans', sans-serif;font-weight:normal;transform:scaleX(0.9945);">Details</span>
<span style="left:938.16px;top:361.77px;font-size:17.4px;line-height:17.4px;color:#fff;font-family:'Liberation Sans', sans-serif;font-weight:normal;transform:scaleX(0.9829);">Keine Details</span>
<span style="left:1416.66px;top:361.75px;font-size:16.6px;line-height:16.6px;color:#1b1b1f;font-family:'Liberation Sans', sans-serif;font-weight:normal;transform:scaleX(1.0792);">Oktober</span>
<span style="left:1492.60px;top:378.84px;font-size:14.6px;line-height:14.6px;color:#1b1b1f;font-family:'Liberation Sans', sans-serif;font-weight:normal;transform:scaleX(1.0585);">Abgegeben</span>
<span style="left:1611.40px;top:378.84px;font-size:14.6px;line-height:14.6px;color:#1b1b1f;font-family:'Liberation Sans', sans-serif;font-weight:normal;transform:scaleX(1.0437);">Verbucht</span>
<span style="left:1722.29px;top:361.22px;font-size:16.4px;line-height:16.4px;color:#fff;font-family:'Liberation Sans', sans-serif;font-weight:normal;transform:scaleX(0.9476);">Prüfen</span>
<span style="left:1798.33px;top:361.22px;font-size:16.4px;line-height:16.4px;color:#fff;font-family:'Liberation Sans', sans-serif;font-weight:normal;transform:scaleX(0.9208);">Zurücknehmen</span>
<span style="left:108.95px;top:424.36px;font-size:16.0px;line-height:16.0px;color:#1b1b1f;font-family:'Liberation Sans', sans-serif;font-weight:normal;">Tag</span>
<span style="left:236.30px;top:424.36px;font-size:16.0px;line-height:16.0px;color:#1b1b1f;font-family:'Liberation Sans', sans-serif;font-weight:normal;">Start</span>
<span style="left:323.81px;top:424.36px;font-size:16.0px;line-height:16.0px;color:#1b1b1f;font-family:'Liberation Sans', sans-serif;font-weight:normal;transform:scaleX(0.9501);">Ende</span>
<span style="left:405.09px;top:424.36px;font-size:16.0px;line-height:16.0px;color:#1b1b1f;font-family:'Liberation Sans', sans-serif;font-weight:normal;transform:scaleX(0.9704);">Dauer</span>
<span style="left:464.87px;top:424.36px;font-size:16.0px;line-height:16.0px;color:#1b1b1f;font-family:'Liberation Sans', sans-serif;font-weight:normal;transform:scaleX(0.9818);">Homeoffice</span>
<span style="left:602.52px;top:424.36px;font-size:16.0px;line-height:16.0px;color:#1b1b1f;font-family:'Liberation Sans', sans-serif;font-weight:normal;transform:scaleX(0.9552);">Zeitklasse</span>
<span style="left:930.79px;top:424.36px;font-size:16.0px;line-height:16.0px;color:#1b1b1f;font-family:'Liberation Sans', sans-serif;font-weight:normal;transform:scaleX(0.9648);">Kommentar</span>
<span style="left:1592.37px;top:424.36px;font-size:16.0px;line-height:16.0px;color:#1b1b1f;font-family:'Liberation Sans', sans-serif;font-weight:normal;transform:scaleX(0.9832);">Normalzeit</span>
<span style="left:1681.81px;top:424.36px;font-size:16.0px;line-height:16.0px;color:#1b1b1f;font-family:'Liberation Sans', sans-serif;font-weight:normal;transform:scaleX(0.9818);">Sollzeit</span>
<span style="left:1770.27px;top:414.26px;font-size:16.0px;line-height:16.0px;color:#1b1b1f;font-family:'Liberation Sans', sans-serif;font-weight:normal;transform:scaleX(0.9677);">Gleitzeitab</span>
<span style="left:1771.24px;top:434.36px;font-size:16.0px;line-height:16.0px;color:#1b1b1f;font-family:'Liberation Sans', sans-serif;font-weight:normal;transform:scaleX(0.9619);">weichung</span>
<span style="left:1858.67px;top:424.36px;font-size:16.0px;line-height:16.0px;color:#1b1b1f;font-family:'Liberation Sans', sans-serif;font-weight:normal;transform:scaleX(0.9737);">Gleitzeit</span>
<span style="left:108.80px;top:464.05px;font-size:15.3px;line-height:15.3px;color:#1b1b1f;font-family:'Liberation Sans', sans-serif;font-weight:normal;">Mi,</span>
<span style="left:113.10px;top:484.09px;font-size:15.6px;line-height:15.6px;color:#1b1b1f;font-family:'Liberation Sans', sans-serif;font-weight:normal;transform:scaleX(1.0175);">01.10.</span>
<span style="left:197.82px;top:512.62px;font-size:18.4px;line-height:18.4px;color:#4a8cc6;font-family:'Liberation Sans', sans-serif;font-weight:normal;transform:scaleX(1.0125);">01.10.2025 - 02.10.2025</span>
<span style="left:652.63px;top:513.27px;font-size:17.4px;line-height:17.4px;color:#1b1b1f;font-family:'Liberation Sans', sans-serif;font-weight:normal;transform:scaleX(1.0067);">Ferien</span>
<span style="left:1592.85px;top:509.62px;font-size:18.4px;line-height:18.4px;color:#1b1b1f;font-family:'Liberation Sans', sans-serif;font-weight:normal;">14:24</span>
<span style="left:1681.72px;top:509.62px;font-size:18.4px;line-height:18.4px;color:#1b1b1f;font-family:'Liberation Sans', sans-serif;font-weight:normal;">07:12</span>
<span style="left:1770.42px;top:509.62px;font-size:18.4px;line-height:18.4px;color:#1b1b1f;font-family:'Liberation Sans', sans-serif;font-weight:normal;">07:12</span>
<span style="left:1858.83px;top:509.62px;font-size:18.4px;line-height:18.4px;color:#1b1b1f;font-family:'Liberation Sans', sans-serif;font-weight:normal;">82:45</span>
<span style="left:108.80px;top:544.15px;font-size:15.3px;line-height:15.3px;color:#1b1b1f;font-family:'Liberation Sans', sans-serif;font-weight:normal;">Do,</span>
<span style="left:113.10px;top:564.19px;font-size:15.6px;line-height:15.6px;color:#1b1b1f;font-family:'Liberation Sans', sans-serif;font-weight:normal;transform:scaleX(1.0175);">02.10.</span>
<span style="left:197.82px;top:592.72px;font-size:18.4px;line-height:18.4px;color:#4a8cc6;font-family:'Liberation Sans', sans-serif;font-weight:normal;transform:scaleX(1.0125);">01.10.2025 - 02.10.2025</span>
<span style="left:652.63px;top:593.37px;font-size:17.4px;line-height:17.4px;color:#1b1b1f;font-family:'Liberation Sans', sans-serif;font-weight:normal;transform:scaleX(1.0067);">Ferien</span>
<span style="left:1681.72px;top:589.72px;font-size:18.4px;line-height:18.4px;color:#1b1b1f;font-family:'Liberation Sans', sans-serif;font-weight:normal;">07:12</span>
<span style="left:1770.42px;top:589.72px;font-size:18.4px;line-height:18.4px;color:#1b1b1f;font-family:'Liberation Sans', sans-serif;font-weight:normal;">-07:12</span>
<span style="left:1858.54px;top:589.72px;font-size:18.4px;line-height:18.4px;color:#1b1b1f;font-family:'Liberation Sans', sans-serif;font-weight:normal;">75:33</span>
<span style="left:108.80px;top:623.55px;font-size:15.3px;line-height:15.3px;color:#1b1b1f;font-family:'Liberation Sans', sans-serif;font-weight:normal;">Fr,</span>
<span style="left:113.10px;top:643.59px;font-size:15.6px;line-height:15.6px;color:#1b1b1f;font-family:'Liberation Sans', sans-serif;font-weight:normal;transform:scaleX(1.0175);">03.10.</span>
<span style="left:197.82px;top:672.12px;font-size:18.4px;line-height:18.4px;color:#4a8cc6;font-family:'Liberation Sans', sans-serif;font-weight:normal;transform:scaleX(1.0125);">03.10.2025 - 03.10.2025</span>
<span style="left:652.60px;top:673.20px;font-size:17.6px;line-height:17.6px;color:#1b1b1f;font-family:'Liberation Sans', sans-serif;font-weight:normal;transform:scaleX(1.0168);">Kompensation</span>
<span style="left:1681.72px;top:669.12px;font-size:18.4px;line-height:18.4px;color:#1b1b1f;font-family:'Liberation Sans', sans-serif;font-weight:normal;">07:12</span>
<span style="left:1770.42px;top:669.12px;font-size:18.4px;line-height:18.4px;color:#1b1b1f;font-family:'Liberation Sans', sans-serif;font-weight:normal;">-07:12</span>
<span style="left:1858.54px;top:669.12px;font-size:18.4px;line-height:18.4px;color:#1b1b1f;font-family:'Liberation Sans', sans-serif;font-weight:normal;">68:21</span>
<span style="left:109.52px;top:703.55px;font-size:15.3px;line-height:15.3px;color:#5789c0;font-family:'Liberation Sans', sans-serif;font-weight:normal;">Sa,</span>
<span style="left:113.10px;top:723.59px;font-size:15.6px;line-height:15.6px;color:#5789c0;font-family:'Liberation Sans', sans-serif;font-weight:normal;transform:scaleX(1.0175);">04.10.</span>
<span style="left:1681.72px;top:712.62px;font-size:18.4px;line-height:18.4px;color:#1b1b1f;font-family:'Liberation Sans', sans-serif;font-weight:normal;">00:00</span>
<span style="left:1770.42px;top:712.62px;font-size:18.4px;line-height:18.4px;color:#1b1b1f;font-family:'Liberation Sans', sans-serif;font-weight:normal;">00:00</span>
<span style="left:1858.54px;top:712.62px;font-size:18.4px;line-height:18.4px;color:#1b1b1f;font-family:'Liberation Sans', sans-serif;font-weight:normal;">68:21</span>
<span style="left:109.52px;top:745.25px;font-size:15.3px;line-height:15.3px;color:#5789c0;font-family:'Liberation Sans', sans-serif;font-weight:normal;">So,</span>
<span style="left:113.10px;top:765.29px;font-size:15.6px;line-height:15.6px;color:#5789c0;font-family:'Liberation Sans', sans-serif;font-weight:normal;transform:scaleX(1.0175);">05.10.</span>
<span style="left:1681.72px;top:754.32px;font-size:18.4px;line-height:18.4px;color:#1b1b1f;font-family:'Liberation Sans', sans-serif;font-weight:normal;">00:00</span>
<span style="left:1770.42px;top:754.32px;font-size:18.4px;line-height:18.4px;color:#1b1b1f;font-family:'Liberation Sans', sans-serif;font-weight:normal;">00:00</span>
<span style="left:1858.54px;top:754.32px;font-size:18.4px;line-height:18.4px;color:#1b1b1f;font-family:'Liberation Sans', sans-serif;font-weight:normal;">68:21</span>
<span style="left:109.52px;top:1157.65px;font-size:15.3px;line-height:15.3px;color:#5789c0;font-family:'Liberation Sans', sans-serif;font-weight:normal;">Sa,</span>
<span style="left:112.57px;top:1177.69px;font-size:15.6px;line-height:15.6px;color:#5789c0;font-family:'Liberation Sans', sans-serif;font-weight:normal;transform:scaleX(1.0595);">11.10.</span>
<span style="left:1681.72px;top:1166.72px;font-size:18.4px;line-height:18.4px;color:#1b1b1f;font-family:'Liberation Sans', sans-serif;font-weight:normal;">00:00</span>
<span style="left:1770.42px;top:1166.72px;font-size:18.4px;line-height:18.4px;color:#1b1b1f;font-family:'Liberation Sans', sans-serif;font-weight:normal;">00:00</span>
<span style="left:1858.54px;top:1166.72px;font-size:18.4px;line-height:18.4px;color:#1b1b1f;font-family:'Liberation Sans', sans-serif;font-weight:normal;">69:51</span>
<span style="left:109.52px;top:1199.55px;font-size:15.3px;line-height:15.3px;color:#5789c0;font-family:'Liberation Sans', sans-serif;font-weight:normal;">So,</span>
<span style="left:112.60px;top:1219.59px;font-size:15.6px;line-height:15.6px;color:#5789c0;font-family:'Liberation Sans', sans-serif;font-weight:normal;transform:scaleX(1.0296);">12.10.</span>
<span style="left:1681.72px;top:1208.62px;font-size:18.4px;line-height:18.4px;color:#1b1b1f;font-family:'Liberation Sans', sans-serif;font-weight:normal;">00:00</span>
<span style="left:1770.42px;top:1208.62px;font-size:18.4px;line-height:18.4px;color:#1b1b1f;font-family:'Liberation Sans', sans-serif;font-weight:normal;">00:00</span>
<span style="left:1858.54px;top:1208.62px;font-size:18.4px;line-height:18.4px;color:#1b1b1f;font-family:'Liberation Sans', sans-serif;font-weight:normal;">69:51</span>
<span style="left:108.80px;top:786.85px;font-size:15.3px;line-height:15.3px;color:#1b1b1f;font-family:'Liberation Sans', sans-serif;font-weight:normal;">Mo,</span>
<span style="left:113.10px;top:806.89px;font-size:15.6px;line-height:15.6px;color:#1b1b1f;font-family:'Liberation Sans', sans-serif;font-weight:normal;transform:scaleX(1.0175);">06.10.</span>
<span style="left:224.11px;top:796.12px;font-size:18.4px;line-height:18.4px;color:#1b1b1f;font-family:'Liberation Sans', sans-serif;font-weight:normal;">06:30</span>
<span style="left:312.61px;top:796.12px;font-size:18.4px;line-height:18.4px;color:#1b1b1f;font-family:'Liberation Sans', sans-serif;font-weight:normal;">12:00</span>
<span style="left:401.11px;top:796.12px;font-size:18.4px;line-height:18.4px;color:#1b1b1f;font-family:'Liberation Sans', sans-serif;font-weight:normal;">05:30</span>
<span style="left:603.30px;top:796.12px;font-size:18.4px;line-height:18.4px;color:#1b1b1f;font-family:'Liberation Sans', sans-serif;font-weight:normal;transform:scaleX(0.9725);">Automatische Zeitklasse</span>
<span style="left:1593.42px;top:796.12px;font-size:18.4px;line-height:18.4px;color:#1b1b1f;font-family:'Liberation Sans', sans-serif;font-weight:normal;">05:30</span>
<span style="left:108.80px;top:827.45px;font-size:15.3px;line-height:15.3px;color:#1b1b1f;font-family:'Liberation Sans', sans-serif;font-weight:normal;">Mo,</span>
<span style="left:113.10px;top:847.49px;font-size:15.6px;line-height:15.6px;color:#1b1b1f;font-family:'Liberation Sans', sans-serif;font-weight:normal;transform:scaleX(1.0175);">06.10.</span>
<span style="left:224.11px;top:836.72px;font-size:18.4px;line-height:18.4px;color:#1b1b1f;font-family:'Liberation Sans', sans-serif;font-weight:normal;">13:30</span>
<span style="left:312.61px;top:836.72px;font-size:18.4px;line-height:18.4px;color:#1b1b1f;font-family:'Liberation Sans', sans-serif;font-weight:normal;">16:00</span>
<span style="left:401.11px;top:836.72px;font-size:18.4px;line-height:18.4px;color:#1b1b1f;font-family:'Liberation Sans', sans-serif;font-weight:normal;">02:30</span>
<span style="left:603.30px;top:836.72px;font-size:18.4px;line-height:18.4px;color:#1b1b1f;font-family:'Liberation Sans', sans-serif;font-weight:normal;transform:scaleX(0.9725);">Automatische Zeitklasse</span>
<span style="left:1593.42px;top:836.72px;font-size:18.4px;line-height:18.4px;color:#1b1b1f;font-family:'Liberation Sans', sans-serif;font-weight:normal;">02:30</span>
<span style="left:1681.72px;top:836.72px;font-size:18.4px;line-height:18.4px;color:#1b1b1f;font-family:'Liberation Sans', sans-serif;font-weight:normal;">07:12</span>
<span style="left:1770.42px;top:836.72px;font-size:18.4px;line-height:18.4px;color:#1b1b1f;font-family:'Liberation Sans', sans-serif;font-weight:normal;">00:48</span>
<span style="left:1858.54px;top:836.72px;font-size:18.4px;line-height:18.4px;color:#1b1b1f;font-family:'Liberation Sans', sans-serif;font-weight:normal;">69:09</span>
<span style="left:108.80px;top:869.25px;font-size:15.3px;line-height:15.3px;color:#1b1b1f;font-family:'Liberation Sans', sans-serif;font-weight:normal;">Di,</span>
<span style="left:113.10px;top:889.29px;font-size:15.6px;line-height:15.6px;color:#1b1b1f;font-family:'Liberation Sans', sans-serif;font-weight:normal;transform:scaleX(1.0175);">07.10.</span>
<span style="left:224.11px;top:878.52px;font-size:18.4px;line-height:18.4px;color:#1b1b1f;font-family:'Liberation Sans', sans-serif;font-weight:normal;">06:00</span>
<span style="left:314.27px;top:878.52px;font-size:18.4px;line-height:18.4px;color:#1b1b1f;font-family:'Liberation Sans', sans-serif;font-weight:normal;">11:45</span>
<span style="left:401.40px;top:878.52px;font-size:18.4px;line-height:18.4px;color:#1b1b1f;font-family:'Liberation Sans', sans-serif;font-weight:normal;">05:45</span>
<span style="left:603.30px;top:878.52px;font-size:18.4px;line-height:18.4px;color:#1b1b1f;font-family:'Liberation Sans', sans-serif;font-weight:normal;transform:scaleX(0.9725);">Automatische Zeitklasse</span>
<span style="left:1593.42px;top:878.52px;font-size:18.4px;line-height:18.4px;color:#1b1b1f;font-family:'Liberation Sans', sans-serif;font-weight:normal;">05:45</span>
<span style="left:108.80px;top:909.85px;font-size:15.3px;line-height:15.3px;color:#1b1b1f;font-family:'Liberation Sans', sans-serif;font-weight:normal;">Di,</span>
<span style="left:113.10px;top:929.89px;font-size:15.6px;line-height:15.6px;color:#1b1b1f;font-family:'Liberation Sans', sans-serif;font-weight:normal;transform:scaleX(1.0175);">07.10.</span>
<span style="left:224.40px;top:919.12px;font-size:18.4px;line-height:18.4px;color:#1b1b1f;font-family:'Liberation Sans', sans-serif;font-weight:normal;">13:15</span>
<span style="left:312.61px;top:919.12px;font-size:18.4px;line-height:18.4px;color:#1b1b1f;font-family:'Liberation Sans', sans-serif;font-weight:normal;">16:00</span>
<span style="left:401.40px;top:919.12px;font-size:18.4px;line-height:18.4px;color:#1b1b1f;font-family:'Liberation Sans', sans-serif;font-weight:normal;">02:45</span>
<span style="left:603.30px;top:919.12px;font-size:18.4px;line-height:18.4px;color:#1b1b1f;font-family:'Liberation Sans', sans-serif;font-weight:normal;transform:scaleX(0.9725);">Automatische Zeitklasse</span>
<span style="left:1593.42px;top:919.12px;font-size:18.4px;line-height:18.4px;color:#1b1b1f;font-family:'Liberation Sans', sans-serif;font-weight:normal;">02:45</span>
<span style="left:1681.72px;top:919.12px;font-size:18.4px;line-height:18.4px;color:#1b1b1f;font-family:'Liberation Sans', sans-serif;font-weight:normal;">07:12</span>
<span style="left:1770.42px;top:919.12px;font-size:18.4px;line-height:18.4px;color:#1b1b1f;font-family:'Liberation Sans', sans-serif;font-weight:normal;">01:18</span>
<span style="left:1858.54px;top:919.12px;font-size:18.4px;line-height:18.4px;color:#1b1b1f;font-family:'Liberation Sans', sans-serif;font-weight:normal;">70:27</span>
<span style="left:108.80px;top:951.35px;font-size:15.3px;line-height:15.3px;color:#1b1b1f;font-family:'Liberation Sans', sans-serif;font-weight:normal;">Mi,</span>
<span style="left:113.10px;top:971.39px;font-size:15.6px;line-height:15.6px;color:#1b1b1f;font-family:'Liberation Sans', sans-serif;font-weight:normal;transform:scaleX(1.0175);">08.10.</span>
<span style="left:224.40px;top:960.62px;font-size:18.4px;line-height:18.4px;color:#1b1b1f;font-family:'Liberation Sans', sans-serif;font-weight:normal;">06:15</span>
<span style="left:312.61px;top:960.62px;font-size:18.4px;line-height:18.4px;color:#1b1b1f;font-family:'Liberation Sans', sans-serif;font-weight:normal;">12:00</span>
<span style="left:401.40px;top:960.62px;font-size:18.4px;line-height:18.4px;color:#1b1b1f;font-family:'Liberation Sans', sans-serif;font-weight:normal;">05:45</span>
<span style="left:603.30px;top:960.62px;font-size:18.4px;line-height:18.4px;color:#1b1b1f;font-family:'Liberation Sans', sans-serif;font-weight:normal;transform:scaleX(0.9725);">Automatische Zeitklasse</span>
<span style="left:1593.42px;top:960.62px;font-size:18.4px;line-height:18.4px;color:#1b1b1f;font-family:'Liberation Sans', sans-serif;font-weight:normal;">05:45</span>
<span style="left:108.80px;top:991.95px;font-size:15.3px;line-height:15.3px;color:#1b1b1f;font-family:'Liberation Sans', sans-serif;font-weight:normal;">Mi,</span>
<span style="left:113.10px;top:1011.99px;font-size:15.6px;line-height:15.6px;color:#1b1b1f;font-family:'Liberation Sans', sans-serif;font-weight:normal;transform:scaleX(1.0175);">08.10.</span>
<span style="left:224.11px;top:1001.22px;font-size:18.4px;line-height:18.4px;color:#1b1b1f;font-family:'Liberation Sans', sans-serif;font-weight:normal;">13:30</span>
<span style="left:312.61px;top:1001.22px;font-size:18.4px;line-height:18.4px;color:#1b1b1f;font-family:'Liberation Sans', sans-serif;font-weight:normal;">16:00</span>
<span style="left:401.11px;top:1001.22px;font-size:18.4px;line-height:18.4px;color:#1b1b1f;font-family:'Liberation Sans', sans-serif;font-weight:normal;">02:30</span>
<span style="left:603.30px;top:1001.22px;font-size:18.4px;line-height:18.4px;color:#1b1b1f;font-family:'Liberation Sans', sans-serif;font-weight:normal;transform:scaleX(0.9725);">Automatische Zeitklasse</span>
<span style="left:1593.42px;top:1001.22px;font-size:18.4px;line-height:18.4px;color:#1b1b1f;font-family:'Liberation Sans', sans-serif;font-weight:normal;">02:30</span>
<span style="left:1681.72px;top:1001.22px;font-size:18.4px;line-height:18.4px;color:#1b1b1f;font-family:'Liberation Sans', sans-serif;font-weight:normal;">07:12</span>
<span style="left:1770.42px;top:1001.22px;font-size:18.4px;line-height:18.4px;color:#1b1b1f;font-family:'Liberation Sans', sans-serif;font-weight:normal;">01:03</span>
<span style="left:1858.54px;top:1001.22px;font-size:18.4px;line-height:18.4px;color:#1b1b1f;font-family:'Liberation Sans', sans-serif;font-weight:normal;">71:30</span>
<span style="left:108.80px;top:1033.35px;font-size:15.3px;line-height:15.3px;color:#1b1b1f;font-family:'Liberation Sans', sans-serif;font-weight:normal;">Do,</span>
<span style="left:113.10px;top:1053.39px;font-size:15.6px;line-height:15.6px;color:#1b1b1f;font-family:'Liberation Sans', sans-serif;font-weight:normal;transform:scaleX(1.0175);">09.10.</span>
<span style="left:224.11px;top:1042.62px;font-size:18.4px;line-height:18.4px;color:#1b1b1f;font-family:'Liberation Sans', sans-serif;font-weight:normal;">06:00</span>
<span style="left:312.61px;top:1042.62px;font-size:18.4px;line-height:18.4px;color:#1b1b1f;font-family:'Liberation Sans', sans-serif;font-weight:normal;">12:00</span>
<span style="left:401.11px;top:1042.62px;font-size:18.4px;line-height:18.4px;color:#1b1b1f;font-family:'Liberation Sans', sans-serif;font-weight:normal;">06:00</span>
<span style="left:603.30px;top:1042.62px;font-size:18.4px;line-height:18.4px;color:#1b1b1f;font-family:'Liberation Sans', sans-serif;font-weight:normal;transform:scaleX(0.9725);">Automatische Zeitklasse</span>
<span style="left:1593.42px;top:1042.62px;font-size:18.4px;line-height:18.4px;color:#1b1b1f;font-family:'Liberation Sans', sans-serif;font-weight:normal;">06:00</span>
<span style="left:108.80px;top:1073.95px;font-size:15.3px;line-height:15.3px;color:#1b1b1f;font-family:'Liberation Sans', sans-serif;font-weight:normal;">Do,</span>
<span style="left:113.10px;top:1093.99px;font-size:15.6px;line-height:15.6px;color:#1b1b1f;font-family:'Liberation Sans', sans-serif;font-weight:normal;transform:scaleX(1.0175);">09.10.</span>
<span style="left:224.11px;top:1083.22px;font-size:18.4px;line-height:18.4px;color:#1b1b1f;font-family:'Liberation Sans', sans-serif;font-weight:normal;">13:30</span>
<span style="left:312.90px;top:1083.22px;font-size:18.4px;line-height:18.4px;color:#1b1b1f;font-family:'Liberation Sans', sans-serif;font-weight:normal;">16:15</span>
<span style="left:401.40px;top:1083.22px;font-size:18.4px;line-height:18.4px;color:#1b1b1f;font-family:'Liberation Sans', sans-serif;font-weight:normal;">02:45</span>
<span style="left:603.30px;top:1083.22px;font-size:18.4px;line-height:18.4px;color:#1b1b1f;font-family:'Liberation Sans', sans-serif;font-weight:normal;transform:scaleX(0.9725);">Automatische Zeitklasse</span>
<span style="left:1593.42px;top:1083.22px;font-size:18.4px;line-height:18.4px;color:#1b1b1f;font-family:'Liberation Sans', sans-serif;font-weight:normal;">02:45</span>
<span style="left:1681.72px;top:1083.22px;font-size:18.4px;line-height:18.4px;color:#1b1b1f;font-family:'Liberation Sans', sans-serif;font-weight:normal;">07:12</span>
<span style="left:1770.42px;top:1083.22px;font-size:18.4px;line-height:18.4px;color:#1b1b1f;font-family:'Liberation Sans', sans-serif;font-weight:normal;">01:33</span>
<span style="left:1858.54px;top:1083.22px;font-size:18.4px;line-height:18.4px;color:#1b1b1f;font-family:'Liberation Sans', sans-serif;font-weight:normal;">73:03</span>
<span style="left:108.80px;top:1115.45px;font-size:15.3px;line-height:15.3px;color:#1b1b1f;font-family:'Liberation Sans', sans-serif;font-weight:normal;">Fr,</span>
<span style="left:112.60px;top:1135.49px;font-size:15.6px;line-height:15.6px;color:#1b1b1f;font-family:'Liberation Sans', sans-serif;font-weight:normal;transform:scaleX(1.0296);">10.10.</span>
<span style="left:224.11px;top:1124.72px;font-size:18.4px;line-height:18.4px;color:#1b1b1f;font-family:'Liberation Sans', sans-serif;font-weight:normal;">06:30</span>
<span style="left:312.61px;top:1124.72px;font-size:18.4px;line-height:18.4px;color:#1b1b1f;font-family:'Liberation Sans', sans-serif;font-weight:normal;">10:30</span>
<span style="left:401.11px;top:1124.72px;font-size:18.4px;line-height:18.4px;color:#1b1b1f;font-family:'Liberation Sans', sans-serif;font-weight:normal;">04:00</span>
<span style="left:603.30px;top:1124.72px;font-size:18.4px;line-height:18.4px;color:#1b1b1f;font-family:'Liberation Sans', sans-serif;font-weight:normal;transform:scaleX(0.9725);">Automatische Zeitklasse</span>
<span style="left:1593.42px;top:1124.72px;font-size:18.4px;line-height:18.4px;color:#1b1b1f;font-family:'Liberation Sans', sans-serif;font-weight:normal;">04:00</span>
<span style="left:1681.72px;top:1124.72px;font-size:18.4px;line-height:18.4px;color:#1b1b1f;font-family:'Liberation Sans', sans-serif;font-weight:normal;">07:12</span>
<span style="left:1770.42px;top:1124.72px;font-size:18.4px;line-height:18.4px;color:#1b1b1f;font-family:'Liberation Sans', sans-serif;font-weight:normal;">-03:12</span>
<span style="left:1858.54px;top:1124.72px;font-size:18.4px;line-height:18.4px;color:#1b1b1f;font-family:'Liberation Sans', sans-serif;font-weight:normal;">69:51</span>
</body></html>
